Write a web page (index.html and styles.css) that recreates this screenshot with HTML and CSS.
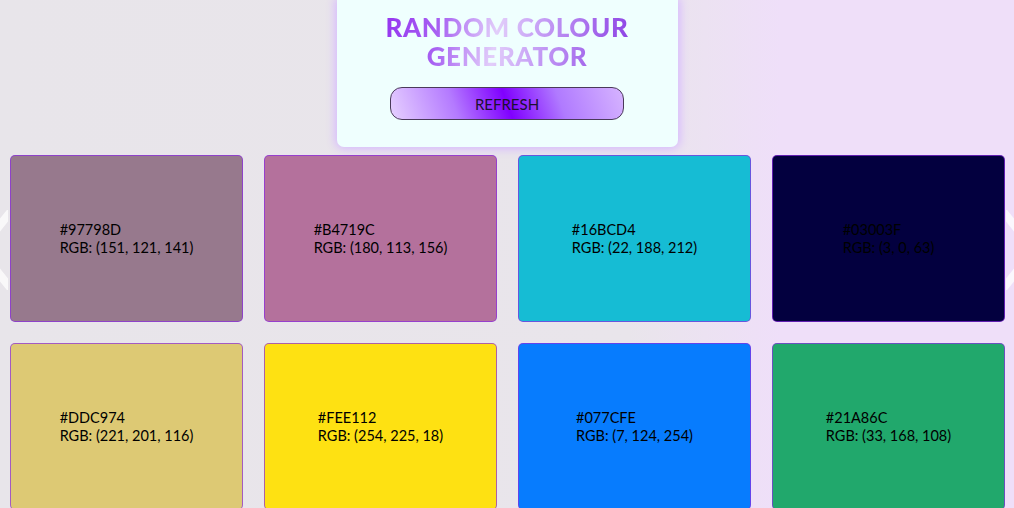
FILE: index.html
```html
<!DOCTYPE html>
<html lang="en">
<head>
<meta charset="utf-8">
<title>Random Colour Generator</title>
<link rel="stylesheet" href="styles.css">
</head>
<body>
<svg class="arrow arrow-left" width="40" height="80" viewBox="0 0 40 80" aria-hidden="true"><polyline points="44,0 12,40 44,80" fill="none" stroke="#ffffff" stroke-width="8"/></svg>
<svg class="arrow arrow-right" width="40" height="80" viewBox="0 0 40 80" aria-hidden="true"><polyline points="-4,0 28,40 -4,80" fill="none" stroke="#ffffff" stroke-width="8"/></svg>
<header class="panel">
  <h1 class="title">RANDOM COLOUR<br>GENERATOR</h1>
  <button class="refresh" type="button">REFRESH</button>
</header>
<main class="grid">
  <div class="swatch" style="background:#97798D"><div class="info"><div>#97798D</div><div>RGB: (151, 121, 141)</div></div></div>
  <div class="swatch" style="background:#B4719C"><div class="info"><div>#B4719C</div><div>RGB: (180, 113, 156)</div></div></div>
  <div class="swatch" style="background:#16BCD4"><div class="info"><div>#16BCD4</div><div>RGB: (22, 188, 212)</div></div></div>
  <div class="swatch" style="background:#03003F"><div class="info"><div>#03003F</div><div>RGB: (3, 0, 63)</div></div></div>
  <div class="swatch" style="background:#DDC974"><div class="info"><div>#DDC974</div><div>RGB: (221, 201, 116)</div></div></div>
  <div class="swatch" style="background:#FEE112"><div class="info"><div>#FEE112</div><div>RGB: (254, 225, 18)</div></div></div>
  <div class="swatch" style="background:#077CFE"><div class="info"><div>#077CFE</div><div>RGB: (7, 124, 254)</div></div></div>
  <div class="swatch" style="background:#21A86C"><div class="info"><div>#21A86C</div><div>RGB: (33, 168, 108)</div></div></div>
</main>
</body>
</html>
```

FILE: styles.css
```css
* { box-sizing: border-box; }

html, body {
  margin: 0;
  padding: 0;
}

body {
  position: relative;
  min-height: 508px;
  overflow: hidden;
  font-family: "Lato", "Open Sans", sans-serif;
  background: linear-gradient(to right, #e8e5ea 0%, #e9e5eb 62%, #efdff9 77%, #efdff9 100%);
  color: #000;
}

.arrow {
  position: absolute;
  top: 210px;
  opacity: 0.75;
}
.arrow-left { left: -32px; }
.arrow-right { right: -32px; }

.panel {
  position: relative;
  width: 341px;
  margin: 0 auto;
  padding: 13px 0 27px;
  background: #effffe;
  border-radius: 0 0 7px 7px;
  box-shadow: 0 0 10px 2px #d6b8ff;
  display: flex;
  flex-direction: column;
  align-items: center;
}

.title {
  margin: 0;
  font-size: 26px;
  line-height: 29px;
  font-weight: 900;
  letter-spacing: 0.6px;
  text-align: center;
  background: linear-gradient(100deg, #9535f0 0%, #a862f2 22%, #e2cefa 45%, #c9a4f6 60%, #8a3ee4 100%);
  -webkit-background-clip: text;
  background-clip: text;
  color: transparent;
}

.refresh {
  margin-top: 16px;
  width: 234px;
  height: 33px;
  border: 1px solid #4a3a5a;
  border-radius: 12px;
  background: linear-gradient(70deg, #e6d0ff 0%, #b47aff 28%, #8000ff 50%, #b07aff 72%, #d6b4ff 100%);
  font-family: "Lato", "Open Sans", sans-serif;
  font-size: 15px;
  color: #1c1030;
  padding: 0;
  cursor: pointer;
}

.grid {
  position: relative;
  margin-top: 8px;
  padding: 0 9px 0 10px;
  display: grid;
  grid-template-columns: repeat(4, 1fr);
  gap: 21px;
}

.swatch {
  height: 167px;
  border: 1px solid rgba(138, 43, 226, 0.7);
  border-radius: 5px;
  display: flex;
  align-items: center;
  justify-content: center;
}

.info {
  font-size: 14.5px;
  line-height: 18px;
  text-align: left;
  color: #000;
  white-space: nowrap;
}
```
